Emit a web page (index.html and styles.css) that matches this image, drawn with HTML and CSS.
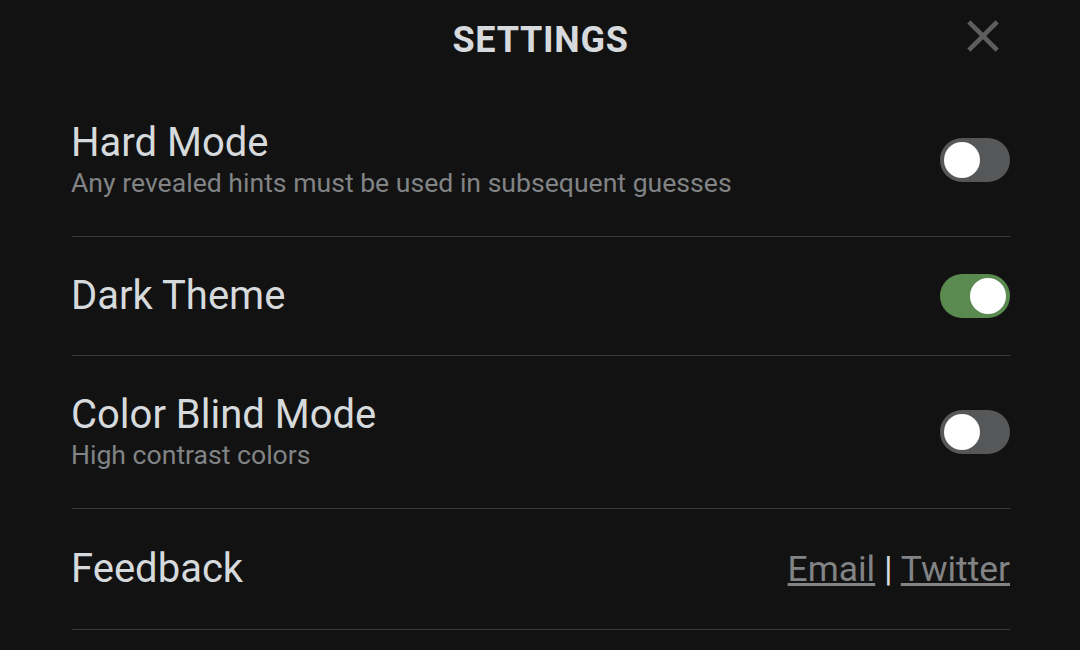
FILE: index.html
```html
<!DOCTYPE html>
<html>
<head>
<meta charset="utf-8">
<link rel="stylesheet" href="styles.css">
</head>
<body>
<div class="page">
  <header class="header">
    <h1 class="title">Settings</h1>
    <button class="close" aria-label="Close">
      <svg viewBox="0 0 24 24" width="54" height="54"><path fill="currentColor" d="M19 6.41L17.59 5 12 10.59 6.41 5 5 6.41 10.59 12 5 17.59 6.41 19 12 13.41 17.59 19 19 17.59 13.41 12z"/></svg>
    </button>
  </header>
  <section class="settings">
    <div class="setting">
      <div class="text">
        <div class="name">Hard Mode</div>
        <div class="desc">Any revealed hints must be used in subsequent guesses</div>
      </div>
      <div class="switch"><span class="knob"></span></div>
    </div>
    <div class="setting">
      <div class="text">
        <div class="name">Dark Theme</div>
      </div>
      <div class="switch on"><span class="knob"></span></div>
    </div>
    <div class="setting">
      <div class="text">
        <div class="name">Color Blind Mode</div>
        <div class="desc">High contrast colors</div>
      </div>
      <div class="switch"><span class="knob"></span></div>
    </div>
    <div class="setting">
      <div class="text">
        <div class="name">Feedback</div>
      </div>
      <div class="links"><a href="#">Email</a> | <a href="#">Twitter</a></div>
    </div>
  </section>
</div>
</body>
</html>
```

FILE: styles.css
```css
html, body {
  margin: 0;
  background: #121213;
  height: 100%;
}
body {
  font-family: Roboto, "Helvetica Neue", Arial, sans-serif;
  color: #d7dadc;
}
.page {
  padding: 0 70px 0 71px;
}
.header {
  height: 84px;
  display: flex;
  align-items: center;
  justify-content: center;
}
.title {
  margin: 0;
  font-size: 36px;
  font-weight: 700;
  text-transform: uppercase;
  letter-spacing: 0.02em;
  color: #d7dadc;
  position: relative;
  top: -2px;
}
.close {
  position: absolute;
  top: 9px;
  right: 70px;
  width: 54px;
  height: 54px;
  padding: 0;
  border: 0;
  background: none;
  color: #5e5e60;
  display: flex;
}
.setting {
  display: flex;
  align-items: center;
  justify-content: space-between;
  padding: 36px 0;
  border-bottom: 1px solid #3a3a3c;
}
.settings {
  margin-left: 1px;
}
.name {
  font-size: 40px;
  line-height: 46px;
  color: #d7dadc;
  margin-left: -1px;
}
.desc {
  font-size: 26.6px;
  line-height: 34px;
  color: #818384;
  margin-left: -1px;
}
.switch {
  width: 70px;
  height: 44px;
  border-radius: 999px;
  background: #565758;
  display: flex;
  align-items: center;
  padding: 0 4px;
  box-sizing: border-box;
}
.switch.on {
  background: #5a8a50;
  justify-content: flex-end;
}
.knob {
  width: 36px;
  height: 36px;
  border-radius: 50%;
  background: #fff;
}
.links {
  font-size: 35.4px;
  line-height: 48px;
  color: #d7dadc;
}
.links a {
  color: #818384;
}
```
